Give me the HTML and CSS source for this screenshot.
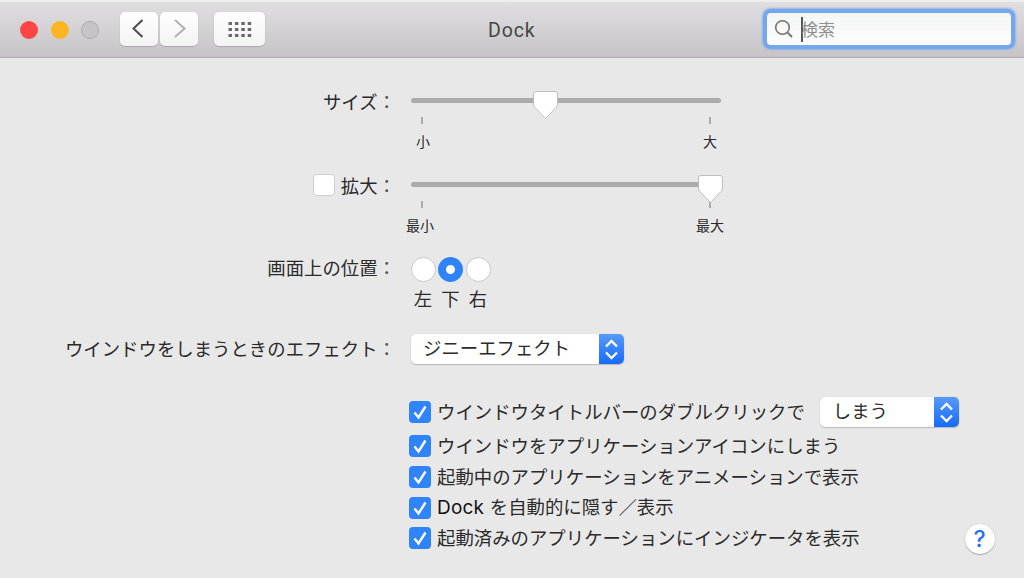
FILE: index.html
```html
<!DOCTYPE html>
<html lang="ja">
<head>
<meta charset="utf-8">
<title>Dock</title>
<link rel="stylesheet" href="styles.css">
</head>
<body>
<div class="window">
  <header class="titlebar">
    <div class="lights"><span class="light red"></span><span class="light yellow"></span><span class="light off"></span></div>
    <div class="nav">
      <button class="tool" aria-label="Back"><svg width="38" height="34" viewBox="0 0 38 34"><path d="M22.500 8L13.500 16.500l9 8.500" fill="none" stroke="#4c4c4c" stroke-width="2"/></svg></button>
      <button class="tool" aria-label="Forward"><svg width="38" height="34" viewBox="0 0 38 34"><path d="M15 8l9.500 8.500L15 25" fill="none" stroke="#b0b0b0" stroke-width="2"/></svg></button>
    </div>
    <button class="tool grid-button" aria-label="Show all"><svg width="51" height="34" viewBox="0 0 51 34"><path d="M14.500 11.500h23M14.500 17.500h23M14.500 23.500h23" fill="none" stroke="#6a6a6a" stroke-width="3" stroke-dasharray="3.500 2.900"/></svg></button>
    <h1 class="title">Dock</h1>
    <div class="search">
      <svg class="lens" width="20" height="20" viewBox="0 0 20 20"><circle cx="8.500" cy="8.500" r="6.800" fill="none" stroke="#747474" stroke-width="1.600"/><path d="M13.400 13.400l4.600 4.600" stroke="#747474" stroke-width="2"/></svg>
      <span class="caret"></span><span class="placeholder">検索</span>
    </div>
  </header>

  <main class="panel">
    <section class="row size-row">
      <div class="label">サイズ<span class="colon">：</span></div>
      <div class="slider">
        <div class="track"><svg class="thumb thumb-mid" width="27" height="30" viewBox="0 0 27 30"><path d="M4 1.500h19q2.500 0 2.500 2.500v10q0 2-1.300 3.400L13.500 28.500 2.800 17.400Q1.500 16 1.500 14V4Q1.500 1.500 4 1.500z" fill="#fff" stroke="#bdbdbd"/></svg></div>
        <div class="scale"><span class="stop">小</span><span class="stop">大</span></div>
      </div>
    </section>
    <section class="row zoom-row">
      <div class="label"><span class="box"></span>拡大<span class="colon">：</span></div>
      <div class="slider">
        <div class="track"><svg class="thumb thumb-max" width="27" height="30" viewBox="0 0 27 30"><path d="M4 1.500h19q2.500 0 2.500 2.500v10q0 2-1.300 3.400L13.500 28.500 2.800 17.400Q1.500 16 1.500 14V4Q1.500 1.500 4 1.500z" fill="#fff" stroke="#bdbdbd"/></svg></div>
        <div class="scale wide"><span class="stop">最小</span><span class="stop">最大</span></div>
      </div>
    </section>
    <section class="row position-row">
      <div class="label">画面上の位置<span class="colon">：</span></div>
      <div class="radios">
        <div class="option"><span class="radio"></span><span>左</span></div>
        <div class="option"><span class="radio on"></span><span>下</span></div>
        <div class="option"><span class="radio"></span><span>右</span></div>
      </div>
    </section>
    <section class="row effect-row">
      <div class="label">ウインドウをしまうときのエフェクト<span class="colon">：</span></div>
      <div class="select effect"><span class="value">ジニーエフェクト</span><span class="stepper"><svg width="25" height="30" viewBox="0 0 25 30"><path d="M7 12.500l5.500-5.500 5.500 5.500M7 18.500l5.500 5.500 5.500-5.500" fill="none" stroke="#fff" stroke-width="2.300"/></svg></span></div>
    </section>
    <section class="checks">
      <div class="check double"><span class="box on"><svg width="22" height="22" viewBox="0 0 22 22"><path d="M5.500 11.500l4 5L16.500 5.500" fill="none" stroke="#fff" stroke-width="2.400"/></svg></span><span class="text">ウインドウタイトルバーのダブルクリックで</span>
        <div class="select action"><span class="value">しまう</span><span class="stepper"><svg width="25" height="30" viewBox="0 0 25 30"><path d="M7 12.500l5.500-5.500 5.500 5.500M7 18.500l5.500 5.500 5.500-5.500" fill="none" stroke="#fff" stroke-width="2.300"/></svg></span></div>
      </div>
      <div class="check"><span class="box on"><svg width="22" height="22" viewBox="0 0 22 22"><path d="M5.500 11.500l4 5L16.500 5.500" fill="none" stroke="#fff" stroke-width="2.400"/></svg></span><span class="text">ウインドウをアプリケーションアイコンにしまう</span></div>
      <div class="check"><span class="box on"><svg width="22" height="22" viewBox="0 0 22 22"><path d="M5.500 11.500l4 5L16.500 5.500" fill="none" stroke="#fff" stroke-width="2.400"/></svg></span><span class="text">起動中のアプリケーションをアニメーションで表示</span></div>
      <div class="check"><span class="box on"><svg width="22" height="22" viewBox="0 0 22 22"><path d="M5.500 11.500l4 5L16.500 5.500" fill="none" stroke="#fff" stroke-width="2.400"/></svg></span><span class="text"><span class="latin">Dock </span>を自動的に隠す／表示</span></div>
      <div class="check last"><span class="box on"><svg width="22" height="22" viewBox="0 0 22 22"><path d="M5.500 11.500l4 5L16.500 5.500" fill="none" stroke="#fff" stroke-width="2.400"/></svg></span><span class="text">起動済みのアプリケーションにインジケータを表示</span><button class="help">?</button></div>
    </section>
  </main>
</div>
</body>
</html>
```
FILE: styles.css
```css
* { box-sizing: border-box; }
body { margin: 0; background: #e8e8e8; }
.window {
  width: 1024px; height: 578px; overflow: hidden;
  font-family: "Noto Sans CJK JP", sans-serif;
  font-size: 18.4px; line-height: 28px; color: #2b2b2b;
  background: #e8e8e8;
}
svg { display: block; }
button { border: 0; padding: 0; margin: 0; font: inherit; }

.titlebar {
  display: flex; align-items: center;
  height: 58px; padding: 0 9px 0 20px;
  background: linear-gradient(#e0dee0, #c6c4c6);
  border-top: 2px solid #eeeeee; border-bottom: 1px solid #b0aeb0;
}
.lights { display: flex; gap: 12.500px; width: 100px; }
.light { width: 18px; height: 18px; border-radius: 50%; }
.red { background: #ff4545; }
.yellow { background: #ffb421; }
.off { background: #c6c4c6; border: 1px solid #acaaac; }
.nav { display: flex; gap: 2px; margin-right: 16px; }
.tool {
  width: 38px; height: 34px; border-radius: 5px; margin-bottom: 1px;
  background: linear-gradient(#fefefe, #f3f3f3);
  box-shadow: 0 1px 1px #aaa8aa, 0 0 1px #bbb;
}
.grid-button { width: 51px; }
.title {
  flex: 1; margin: 2px 0 0 223px;
  font: 400 19.500px/28px Roboto, sans-serif; letter-spacing: .9px; color: #464646;
}
.search {
  display: flex; align-items: center;
  width: 244px; height: 32px; margin: 0 4px 1px 0; padding-left: 7px;
  background: linear-gradient(#f4f5f5, #fdfdfd); border-radius: 4px;
  box-shadow: 0 0 0 4px #75a7ee, 0 0 2px 4.500px #92b4e7;
}
.caret { width: 2px; height: 25px; margin-left: 7px; background: #555; }
.placeholder { font-size: 17px; line-height: 26px; color: #8f8f8f; margin-left: -2px; }

.panel { padding-top: 31px; }
.row { display: grid; grid-template-columns: 396px 1fr; column-gap: 15px; }
.size-row { height: 84px; }
.zoom-row { height: 82px; }
.label { display: flex; justify-content: flex-end; align-items: center; height: 28px; margin-top: -2px; }
.colon { color: #555; }
.box {
  display: block; width: 22px; height: 22px; border-radius: 4px; flex: none;
  background: #fff; border: 1px solid #cdcdcd; margin-right: 6px;
}
.box.on { background: #2f83fb; border: 0; }
.slider { width: 310px; padding-top: 9px; }
.track { position: relative; height: 5px; border-radius: 3px; background: #ababab; }
.thumb { position: absolute; top: -8px; z-index: 1; }
.thumb-mid { left: 121px; }
.thumb-max { left: 286px; }
.scale { display: flex; justify-content: space-between; width: 318px; margin: 14px 0 0 -5px; }
.stop {
  display: flex; flex-direction: column; align-items: center;
  width: 28px; font-size: 14px; line-height: 20px; white-space: nowrap;
}
.stop::before { content: ""; width: 2px; height: 7px; margin-bottom: 7px; background: #aaa; }
.stop:first-child::before { margin-left: 3px; }
.scale:not(.wide) .stop:first-child { padding-left: 6px; }
.scale:not(.wide) .stop:first-child::before { margin-left: -3px; }
.position-row { height: 79px; }
.radios { display: flex; gap: 3.500px; padding-top: 2px; }
.option { display: flex; flex-direction: column; align-items: center; width: 24px; line-height: 28px; }
.radio {
  width: 25px; height: 25px; margin-bottom: 2px; border-radius: 50%;
  background: #fff; border: 1px solid #c8c8c8;
}
.radio.on { border: 8px solid #2f83fb; }
.effect-row { align-items: center; height: 30px; }
.select {
  display: flex; height: 30px; border-radius: 5px; overflow: hidden;
  background: #fff; box-shadow: 0 1px 1px #b9b9b9, 0 0 1px #bbb;
}
.effect { width: 213px; }
.action { width: 139px; margin-left: 15px; }
.value { flex: 1; padding-left: 12px; line-height: 27px; }
.action .value { padding-left: 13px; }
.stepper { width: 25px; background: linear-gradient(#579afa, #176afb); }
.checks { padding: 32px 0 0 409px; }
.check { display: flex; align-items: center; height: 30.700px; white-space: nowrap; }
.text { margin-top: -2px; }
.double { height: 35px; padding-bottom: 4px; }
.latin { font-family: Inter, sans-serif; font-size: 19px; letter-spacing: .2px; color: #111; }
.help {
  width: 30px; height: 30px; margin: 2px 0 0 105px; border-radius: 50%;
  background: #fff; box-shadow: 0 1px 1px #aaa, 0 0 1px #aaa;
  font: 500 23px/30px Inter, sans-serif; color: #256ff5;
}
```
